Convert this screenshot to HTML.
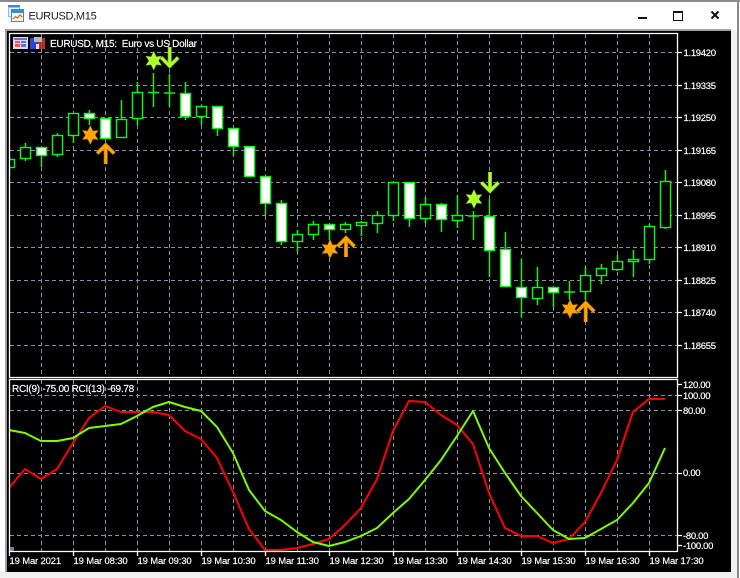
<!DOCTYPE html>
<html><head><meta charset="utf-8"><style>
html,body{margin:0;padding:0;width:740px;height:578px;overflow:hidden;background:#fff}
svg{display:block}
text{font-family:"Liberation Sans",sans-serif;font-size:10px;fill:#fff;stroke:#fff;stroke-width:.18px;letter-spacing:-.27px;white-space:pre}
.ax text{font-size:9.5px;letter-spacing:-.3px}
.tm text{font-size:9.5px;letter-spacing:-.17px}
</style></head><body>
<svg width="740" height="578" viewBox="0 0 740 578" xmlns="http://www.w3.org/2000/svg">
<defs>
<clipPath id="m"><rect x="10" y="34" width="667" height="343"/></clipPath>
<clipPath id="s"><rect x="10" y="380" width="667" height="171"/></clipPath>
<polygon id="star" points="0,-9.500 2.600,-4 7.900,-4.600 4.800,0 7.900,4.600 2.600,4 0,9.500 -2.600,4 -7.900,4.600 -4.800,0 -7.900,-4.600 -2.600,-4"/>
<g id="up" fill="none"><path d="M-8.500 10.500L0 2L8.500 10.500M0 2V21" stroke="#b06c10" stroke-width="4"/><path d="M-8.500 10.500L0 2L8.500 10.500M0 2V21" stroke="#ffa500" stroke-width="2.800"/></g>
<g id="dn" fill="none"><path d="M-8.500 -10.500L0 -2L8.500 -10.500M0 -2V-21" stroke="#7ba020" stroke-width="4"/><path d="M-8.500 -10.500L0 -2L8.500 -10.500M0 -2V-21" stroke="#adff2f" stroke-width="2.800"/></g>
</defs>
<!-- window -->
<rect width="740" height="578" fill="#fff"/>
<rect width="740" height="2" fill="#8a8a8a"/>
<rect x="737" y="0" width="2" height="578" fill="#8a8a8a"/>
<rect x="5" y="29" width="726" height="543" fill="#000"/>
<rect x="5" y="29" width="726" height="2" fill="#a0a0a0"/>
<rect x="5" y="29" width="2" height="543" fill="#a0a0a0"/>
<rect x="731" y="31" width="6" height="547" fill="#f0f0f0"/>
<rect x="0" y="572" width="737" height="6" fill="#f0f0f0"/>
<!-- title icon -->
<g shape-rendering="crispEdges">
<rect x="8" y="5" width="12" height="12" fill="#7fc4ee"/><rect x="8" y="5" width="12" height="2" fill="#2f8fd8"/><rect x="9" y="8" width="10" height="8" fill="#e8f4fb"/>
<rect x="11" y="9" width="13" height="13" fill="#2f8fd8"/><rect x="12" y="13" width="11" height="8" fill="#fdf6ec"/>
</g>
<path d="M13 19L15.500 16.500L17.500 18L20 15L22.500 17" fill="none" stroke="#e8632a" stroke-width="1.200"/>
<text x="28.500" y="19.500" style="font-size:11px;fill:#1a1a1a;stroke:none;letter-spacing:-.3px">EURUSD,M15</text>
<!-- controls -->
<g shape-rendering="crispEdges"><rect x="638" y="17" width="9" height="2" fill="#111"/><rect x="673.500" y="11.500" width="9" height="9" fill="none" stroke="#111"/><rect x="673" y="11" width="10" height="2" fill="#111"/></g>
<path d="M711.500 11.500L718.500 18.500M718.500 11.500L711.500 18.500" stroke="#111" stroke-width="2" fill="none"/>
<!-- grid -->
<g stroke="#8494a4" stroke-dasharray="4 3" fill="none" shape-rendering="crispEdges">
<path clip-path="url(#m)" d="M41.500 34V377M73.500 34V377M105.500 34V377M137.500 34V377M169.500 34V377M201.500 34V377M233.500 34V377M265.500 34V377M297.500 34V377M329.500 34V377M361.500 34V377M393.500 34V377M425.500 34V377M457.500 34V377M489.500 34V377M521.500 34V377M553.500 34V377M585.500 34V377M617.500 34V377M649.500 34V377"/>
<path d="M10 52.500H677M10 85.500H677M10 117.500H677M10 150.500H677M10 182.500H677M10 215.500H677M10 247.500H677M10 280.500H677M10 312.500H677M10 345.500H677"/>
<path d="M41.500 380V551M73.500 380V551M105.500 380V551M137.500 380V551M169.500 380V551M201.500 380V551M233.500 380V551M265.500 380V551M297.500 380V551M329.500 380V551M361.500 380V551M393.500 380V551M425.500 380V551M457.500 380V551M489.500 380V551M521.500 380V551M553.500 380V551M585.500 380V551M617.500 380V551M649.500 380V551"/>
<path d="M10 395.500H677M10 410.500H677M10 473.500H677M10 535.500H677"/>
</g>
<!-- candles -->
<g clip-path="url(#m)" stroke="#0f0" stroke-width="1.400">
<path fill="none" d="M9.500 155V175M25.500 143V161M41.500 147V167M57.500 133V157M73.500 113V143M89.500 110V125M105.500 118V138M121.500 100V138M137.500 82V125M153.500 73V107M169.500 74V107M185.500 82V120M201.500 106V125M217.500 106V136M233.500 128V156M249.500 146V176M265.500 176V215M281.500 200V245M297.500 230V252M313.500 221V240M329.500 224V240M345.500 222V233M361.500 221V236M377.500 211V233M393.500 182V221M409.500 182V227M425.500 197V223M441.500 203V232M457.500 195V228M473.500 211V240M489.500 199V277M505.500 232V286M521.500 259V317M537.500 267V305M553.500 287V307M569.500 281V300M585.500 267V300M601.500 264V284M617.500 255V271M633.500 250V277M649.500 224V264M665.500 170V229"/>
<path fill="none" d="M148 92.500H159M164 93H175M564 292H575M468 216H479"/>
<g fill="#000">
<rect x="4.500" y="159.500" width="10" height="8"/><rect x="20.500" y="147.500" width="10" height="11"/>
<rect x="52.500" y="135.500" width="10" height="19"/><rect x="68.500" y="113.500" width="10" height="22"/>
<rect x="116.500" y="119.500" width="10" height="18"/><rect x="132.500" y="92.500" width="10" height="26"/>
<rect x="196.500" y="106.500" width="10" height="10"/><rect x="292.500" y="234.500" width="10" height="7"/>
<rect x="308.500" y="224.500" width="10" height="10"/><rect x="340.500" y="224.500" width="10" height="5"/>
<rect x="356.500" y="222.500" width="10" height="3"/><rect x="372.500" y="215.500" width="10" height="8"/>
<rect x="388.500" y="182.500" width="10" height="33"/><rect x="420.500" y="204.500" width="10" height="14"/>
<rect x="452.500" y="215.500" width="10" height="5"/><rect x="532.500" y="287.500" width="10" height="11"/>
<rect x="580.500" y="275.500" width="10" height="16"/><rect x="596.500" y="268.500" width="10" height="7"/>
<rect x="612.500" y="261.500" width="10" height="8"/><rect x="628.500" y="259.500" width="10" height="2"/>
<rect x="644.500" y="226.500" width="10" height="33"/><rect x="660.500" y="181.500" width="10" height="46"/>
</g>
<g fill="#fff">
<rect x="36.500" y="147.500" width="10" height="8"/><rect x="84.500" y="113.500" width="10" height="5"/>
<rect x="100.500" y="118.500" width="10" height="20"/><rect x="180.500" y="93.500" width="10" height="23"/>
<rect x="212.500" y="106.500" width="10" height="22"/><rect x="228.500" y="128.500" width="10" height="18"/>
<rect x="244.500" y="146.500" width="10" height="30"/><rect x="260.500" y="176.500" width="10" height="27"/>
<rect x="276.500" y="203.500" width="10" height="38"/><rect x="324.500" y="224.500" width="10" height="5"/>
<rect x="404.500" y="182.500" width="10" height="36"/><rect x="436.500" y="204.500" width="10" height="15"/>
<rect x="484.500" y="216.500" width="10" height="34"/><rect x="500.500" y="249.500" width="10" height="37"/>
<rect x="516.500" y="287.500" width="10" height="10"/><rect x="548.500" y="287.500" width="10" height="5"/>
</g>
</g>
<!-- markers -->
<g fill="#ffa500" stroke="#b06c10" stroke-width=".5">
<use href="#star" x="90.300" y="135"/><use href="#star" x="330" y="249"/><use href="#star" x="570" y="309"/>
</g>
<g fill="#adff2f" stroke="#7ba020" stroke-width=".5">
<use href="#star" x="153.700" y="60.700"/><use href="#star" x="474" y="199"/>
</g>
<use href="#up" x="105.700" y="143"/><use href="#up" x="346" y="236"/><use href="#up" x="585.700" y="301"/>
<use href="#dn" x="169.700" y="68"/><use href="#dn" x="490" y="193"/>
<!-- indicator -->
<rect x="9" y="547" width="5" height="4" fill="#708090"/>
<g clip-path="url(#s)" fill="none" stroke-width="2" stroke-linejoin="round">
<polyline stroke="#ff0000" points="9,488 25,469 41,479 57,469 73,443 89,418 105,406 121,412 137,412 153,412 169,415 185,431 201,439 217,458 233,492 249,529 265,550 281,550 297,548 313,544 329,539 345,525 361,508 377,479 393,431 409,401 425,402 441,415 457,425 473,444 489,493 505,528 521,536 537,536 553,543 569,539 585,522 601,493 617,460 633,412 649,399 665,399"/>
<polyline stroke="#7cfc00" points="9,430 25,433 41,441 57,441 73,438 89,428 105,426 121,424 137,416 153,407 169,402 185,407 201,411 217,427 233,453 249,490 265,511 281,520 297,532 313,542 329,546 345,542 361,536 377,528 393,513 409,499 425,480 441,460 457,436 473,411 489,448 505,473 521,496 537,513 553,530 569,539 585,538 601,529 617,520 633,503 649,483 665,448"/>
</g>
<!-- frame lines and ticks -->
<g fill="none" stroke="#fff" stroke-width="1.300">
<path d="M9.500 33.500H677.500V377.500H9.500ZM9.500 379.500H677.500V551.500H9.500Z"/>
<path d="M677 52.500H682M677 85.500H682M677 117.500H682M677 150.500H682M677 182.500H682M677 215.500H682M677 247.500H682M677 280.500H682M677 312.500H682M677 345.500H682M677 384.500H682M677 395.500H682M677 410.500H682M677 473.500H682M677 535.500H682M677 545.500H682"/>
<path d="M9.500 551V556M73.500 551V556M137.500 551V556M201.500 551V556M265.500 551V556M329.500 551V556M393.500 551V556M457.500 551V556M521.500 551V556M585.500 551V556M649.500 551V556"/>
</g>
<!-- legend icons -->
<g shape-rendering="crispEdges">
<rect x="13" y="37" width="15" height="12" fill="#d8d8ee"/><rect x="14" y="38" width="13" height="2" fill="#7a6cc8"/><rect x="15" y="41" width="5" height="2" fill="#e06060"/><rect x="21" y="41" width="5" height="2" fill="#6a70d0"/><rect x="15" y="44" width="5" height="3" fill="#e06060"/><rect x="21" y="44" width="5" height="3" fill="#6a70d0"/>
<rect x="30" y="38" width="8" height="11" fill="#3040d8"/><rect x="38" y="38" width="7" height="11" fill="#b03030"/><rect x="34" y="37" width="8" height="5" fill="#b8b8b8"/><rect x="36" y="44" width="3" height="5" fill="#dcdcdc"/>
</g>
<!-- text -->
<text x="50" y="47" xml:space="preserve">EURUSD, M15:  Euro vs US Dollar</text>
<text x="12" y="392">RCI(9) -75.00 RCI(13) -69.78</text>
<g class="ax">
<text x="683.500" y="56">1.19420</text><text x="683.500" y="89">1.19335</text><text x="683.500" y="121">1.19250</text><text x="683.500" y="154">1.19165</text><text x="683.500" y="186">1.19080</text><text x="683.500" y="219">1.18995</text><text x="683.500" y="251">1.18910</text><text x="683.500" y="284">1.18825</text><text x="683.500" y="316">1.18740</text><text x="683.500" y="349">1.18655</text>
<text x="683" y="388">120.00</text><text x="683" y="399">100.00</text><text x="683" y="414">80.00</text><text x="683" y="476">0.00</text><text x="683" y="539">-80.00</text><text x="683" y="549">-100.00</text>
</g>
<g class="tm">
<text x="9.500" y="564">19 Mar 2021</text>
<text x="73.500" y="564">19 Mar 08:30</text><text x="137.500" y="564">19 Mar 09:30</text><text x="201.500" y="564">19 Mar 10:30</text><text x="265.500" y="564">19 Mar 11:30</text><text x="329.500" y="564">19 Mar 12:30</text><text x="393.500" y="564">19 Mar 13:30</text><text x="457.500" y="564">19 Mar 14:30</text><text x="521.500" y="564">19 Mar 15:30</text><text x="585.500" y="564">19 Mar 16:30</text><text x="649.500" y="564">19 Mar 17:30</text>
</g>
</svg>
</body></html>
